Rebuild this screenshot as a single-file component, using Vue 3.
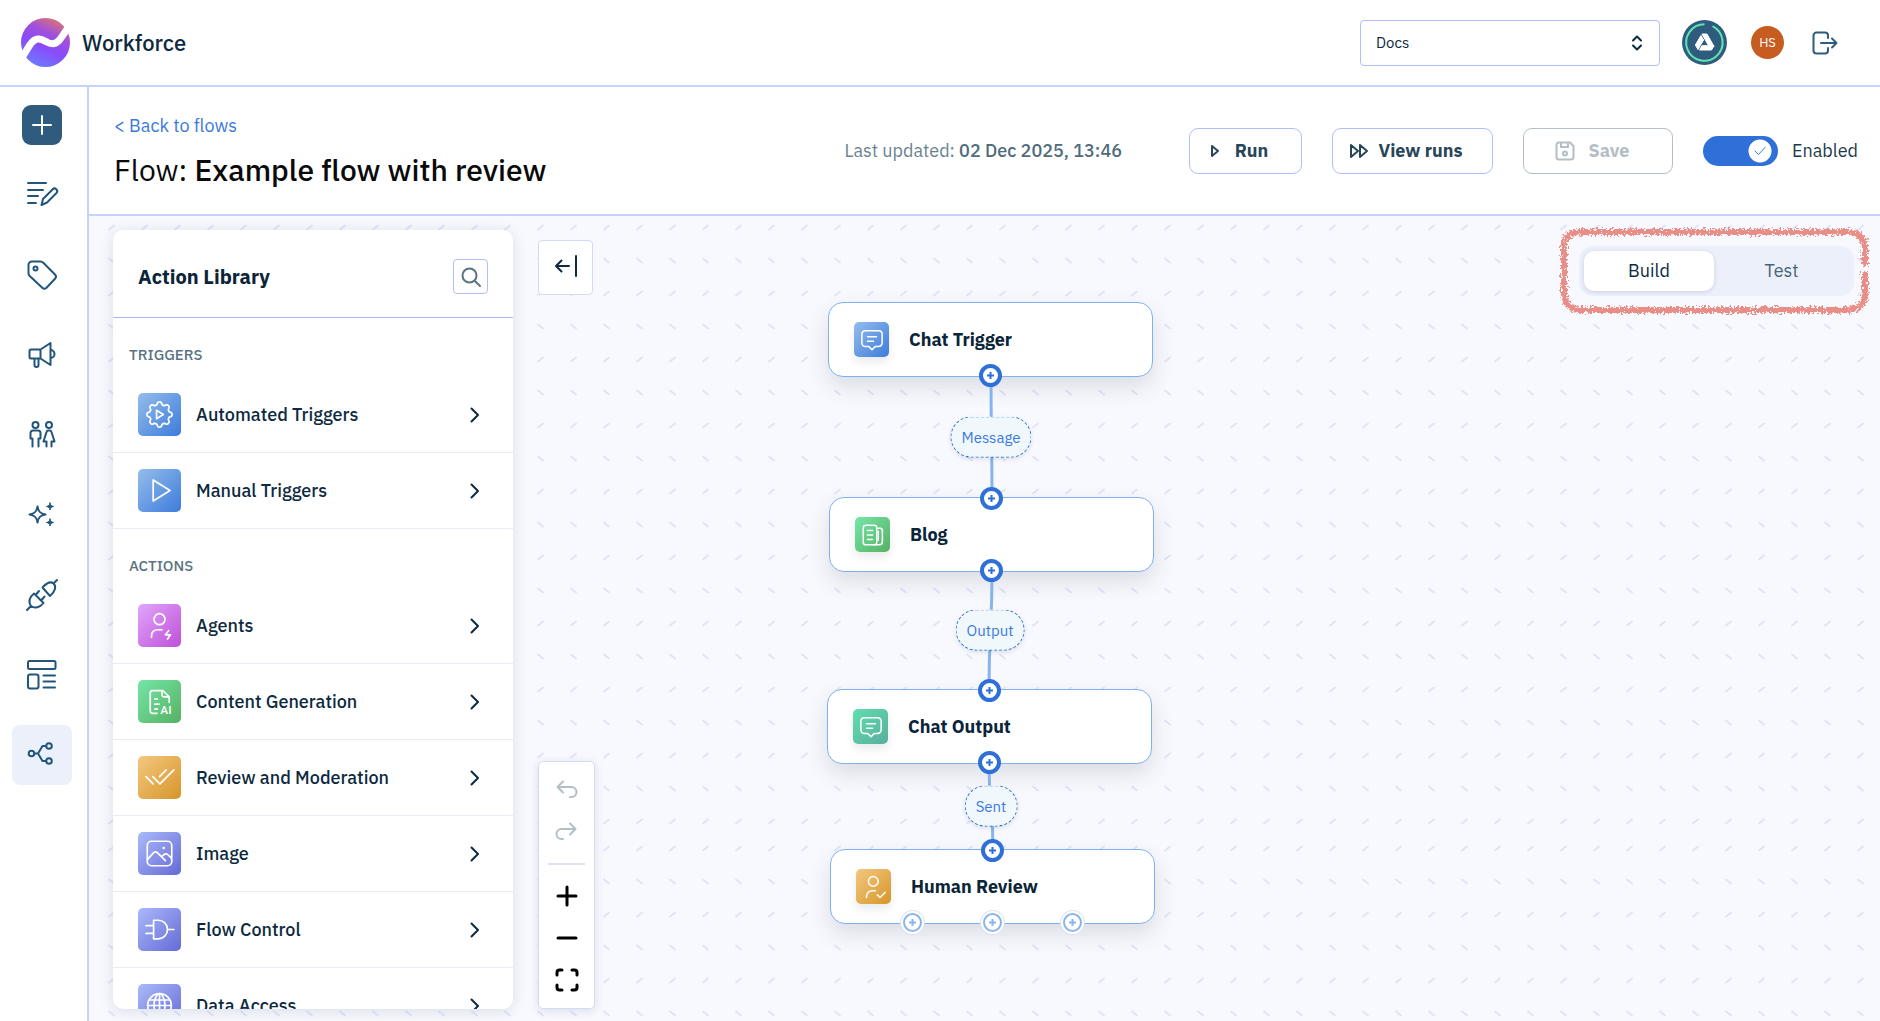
<script setup>
import { ref } from 'vue'

// Outline of an eight-lobed gear centred in a 32px box
const gearOutline = Array.from({ length: 96 }, (_, i) => {
  const angle = (i / 96) * Math.PI * 2
  const radius = 13.3 + 1.7 * Math.tanh(1.8 * Math.cos(8 * angle))
  return `${(16 + radius * Math.sin(angle)).toFixed(1)},${(16 - radius * Math.cos(angle)).toFixed(1)}`
}).join(' ')

const icons = {
  list: '<path d="M2 4h18M2 11h15M2 17h10M2 24h8"/><path d="M15.500 26l1.500-6 9.500-9.500a2.600 2.600 0 0 1 4 3.500L21 23.500z"/>',
  tag: '<path d="M2.500 6a3.500 3.500 0 0 1 3.500-3.500h8.500a4 4 0 0 1 2.800 1.200L29 15.500a3 3 0 0 1 0 4.200l-8.500 9a3 3 0 0 1-4.200 0L3.700 17a4 4 0 0 1-1.200-2.800z"/><circle cx="9.500" cy="9.500" r="2"/>',
  megaphone: '<path d="M12.500 10.500H5A1.500 1.500 0 0 0 3.500 12v6A1.500 1.500 0 0 0 5 19.500h9.500V10.500zM14.500 10.500L24.500 4v22l-10-6.500M24.500 11a4 4 0 0 1 0 8M8.500 19.500V26a2 2 0 0 0 4 0v-6.500"/>',
  people: '<circle cx="9.500" cy="6" r="3"/><circle cx="23" cy="6" r="3"/><path d="M6.500 27.500v-8H4.500V14a2.500 2.500 0 0 1 2.500-2.500h5a2.500 2.500 0 0 1 2.500 2.500v5.500h-2v8M20.500 27.500v-5H17.500l3-9.500a2 2 0 0 1 2-1.500h1a2 2 0 0 1 2 1.500l3 9.500H25.500v5"/>',
  sparkle: '<path d="M11.500 7.500c.8 5.200 2.800 7.200 8 8-5.200.8-7.200 2.800-8 8-.8-5.200-2.800-7.200-8-8 5.200-.8 7.200-2.800 8-8z"/><path fill="currentColor" stroke-width="1" d="M24 4c.5 2.300 1.200 3 3.500 3.500-2.300.5-3 1.200-3.500 3.500-.5-2.300-1.200-3-3.500-3.500 2.300-.5 3-1.200 3.500-3.500zM24 20c.5 2.300 1.200 3 3.500 3.500-2.300.5-3 1.200-3.500 3.500-.5-2.300-1.200-3-3.500-3.500 2.300-.5 3-1.200 3.500-3.500z"/>',
  plug: '<path d="M1 31l4-4M5 27c-3-4-1.500-9 3-12.500l9.500 9.500C14 28.500 8.500 30 5 27zM10 15.500l3-3.500M15.500 21l3-3.500M27.500 4.500L31 1M16.500 8.500c4-4.500 8-6.500 11-4s2 8-3.500 12.500z"/>',
  layout: '<rect x="2" y="2" width="27.500" height="8" rx="1.500"/><rect x="2" y="15.500" width="10.500" height="14" rx="2"/><path d="M17.500 16.500h11.500M17.500 22.500h11.500M17.500 28.500h11.500"/>',
  branch: '<circle cx="5.500" cy="14.500" r="2.800"/><circle cx="23" cy="7" r="2.800"/><circle cx="23" cy="22" r="2.800"/><path d="M8.500 14.500h3.500l4.500-7.500h3.500M12 14.500l4.500 7.500h3.500"/>',
  gearPlay: `<polygon points="${gearOutline}"/><path d="M12.500 11v10l8-5z"/>`,
  play: '<path d="M8.500 3.500v25L28.500 16z"/>',
  agent: '<circle cx="16" cy="8.500" r="6.500"/><path d="M6.500 30v-2a7 7 0 0 1 7-7h5.500M27 22l-4 5h6l-3.500 5"/>',
  contentAi: '<path d="M13 30H8a3 3 0 0 1-3-3V6a3 3 0 0 1 3-3h12l7.500 7.500V17M19 3v5a2.500 2.500 0 0 0 2.500 2.500h6M10.500 13h3M10.500 19h5M10.500 25h3"/><text x="17" y="31" font-size="14" font-family="Roboto, sans-serif" font-weight="500" fill="currentColor" stroke="none">AI</text>',
  checks: '<path d="M0 15l8.500 8.500M8 15l8.500 8.500L33 7M16 15l8-8"/>',
  image: '<rect x="1.500" y="1.500" width="29" height="29" rx="5"/><path d="M2 23l6.500-7.500c2-2 3.500-2 5.500 0L23 24.500M18.500 20l2.500-2.500c2-1.500 3.500-1.500 5 0L30 21.500"/><circle cx="21" cy="9.500" r=".6"/>',
  gate: '<path d="M9 5h5.500a11 11 0 0 1 0 22H9zM0 11.500h9M0 20.500h9M25.500 16H33"/>',
  globe: '<circle cx="16" cy="16" r="14"/><path d="M16 2v28M2.500 16h27M4.500 9.500h23M4.500 22.500h23M14 2.500c-6 8-6 19 0 27M18 2.500c6 8 6 19 0 27"/>',
  chat: '<path d="M7 3.500h18a4.500 4.500 0 0 1 4.500 4.500v12a4.500 4.500 0 0 1-4.500 4.500h-4.500L16 29l-4.500-4.500H7A4.500 4.500 0 0 1 2.500 20V8A4.500 4.500 0 0 1 7 3.500zM10 11.500h12M10 17.500h8"/>',
  news: '<rect x="3" y="3" width="18" height="26" rx="3.500"/><path d="M21 7h4.500a3 3 0 0 1 3 3v15a4 4 0 0 1-4 4H17M23 11v12M8.500 10h7M8.500 16h7M8.500 22h7"/>',
  review: '<circle cx="15" cy="8.500" r="6.500"/><path d="M6 30v-1.500a7.500 7.500 0 0 1 7.500-7.500H18M20.500 26.500l3.500 3.500 7-7"/>'
}

const navItems = [
  { label: 'Content', icon: 'list' },
  { label: 'Tags', icon: 'tag' },
  { label: 'Campaigns', icon: 'megaphone' },
  { label: 'Audiences', icon: 'people' },
  { label: 'AI tools', icon: 'sparkle' },
  { label: 'Integrations', icon: 'plug' },
  { label: 'Templates', icon: 'layout' },
  { label: 'Flows', icon: 'branch', active: true }
]

const sections = [
  {
    title: 'TRIGGERS',
    items: [
      { label: 'Automated Triggers', icon: 'gearPlay', tone: 'blue' },
      { label: 'Manual Triggers', icon: 'play', tone: 'blue' }
    ]
  },
  {
    title: 'ACTIONS',
    items: [
      { label: 'Agents', icon: 'agent', tone: 'purple' },
      { label: 'Content Generation', icon: 'contentAi', tone: 'green' },
      { label: 'Review and Moderation', icon: 'checks', tone: 'amber' },
      { label: 'Image', icon: 'image', tone: 'indigo' },
      { label: 'Flow Control', icon: 'gate', tone: 'indigo' },
      { label: 'Data Access', icon: 'globe', tone: 'indigo' }
    ]
  }
]

const nodes = [
  { label: 'Chat Trigger', icon: 'chat', tone: 'blue', x: 739, y: 86, handles: ['bottom'] },
  { label: 'Blog', icon: 'news', tone: 'green', x: 740, y: 281, handles: ['top', 'bottom'] },
  { label: 'Chat Output', icon: 'chat', tone: 'teal', x: 738, y: 473, handles: ['top', 'bottom'] },
  { label: 'Human Review', icon: 'review', tone: 'amber', x: 741, y: 633, handles: ['top'], outputs: 3 }
]

const edges = [
  { label: 'Message', x: 902, y: 221, from: [902, 160], to: [903, 282] },
  { label: 'Output', x: 901, y: 414, from: [903, 355], to: [900, 474] },
  { label: 'Sent', x: 902, y: 590, from: [900, 547], to: [904, 634] }
]

const project = ref('Docs')
const enabled = ref(true)
const mode = ref('Build')
</script>

<template>
  <div class="app">
    <header class="topbar">
      <a class="brand" href="#">
        <svg width="49" height="49" viewBox="0 0 49 49" aria-hidden="true">
          <defs>
            <linearGradient id="brand" x1=".3" y1="1" x2=".75" y2="0">
              <stop offset="0" stop-color="#6b7cff" />
              <stop offset=".4" stop-color="#8a4bfa" />
              <stop offset=".68" stop-color="#a050dc" />
              <stop offset="1" stop-color="#e2766c" />
            </linearGradient>
          </defs>
          <circle cx="24.500" cy="24.500" r="24.500" fill="url(#brand)" />
          <path d="M2 38C8 29 11 20.500 18 21S27 27 33 25.500 40 19 47 10" fill="none" stroke="#fff" stroke-width="7" />
        </svg>
        <span>Workforce</span>
      </a>
      <div class="top-actions">
        <div class="select-wrap">
          <select v-model="project" aria-label="Project"><option>Docs</option></select>
          <svg width="10" height="16" viewBox="0 0 10 16" class="line" aria-hidden="true"><path d="M1 5.500L5 1.500l4 4M1 10.500l4 4 4-4" /></svg>
        </div>
        <button class="drive" aria-label="Drive">
          <svg width="45" height="45" viewBox="0 0 45 45">
            <circle cx="22.500" cy="22.500" r="22.500" fill="#2f5c7e" />
            <path d="M30.500 6.200A18.200 18.200 0 1 1 22.500 4.300" fill="none" stroke="#5fe3b0" stroke-width="2" />
            <path d="M20 14h5l7 12.500h-5zM19 15.500l2.600 4.500-5.600 9.500-2.600-4.500zM17.500 30l2.500-4.300h12L29.500 30z" fill="#fff" stroke="#fff" stroke-width="1" stroke-linejoin="round" />
          </svg>
        </button>
        <span class="avatar">HS</span>
        <button class="logout" aria-label="Log out">
          <svg width="26" height="24" viewBox="0 0 26 24" class="line"><path d="M16 7V4.500A3 3 0 0 0 13 1.500H4.500a3 3 0 0 0-3 3v15a3 3 0 0 0 3 3H13a3 3 0 0 0 3-3V17M9 12h15.500M20 7.500l4.500 4.500-4.500 4.500" /></svg>
        </button>
      </div>
    </header>

    <div class="body">
      <nav class="sidebar" aria-label="Main">
        <button class="create" aria-label="Create">
          <svg width="20" height="20" viewBox="0 0 20 20" class="line"><path d="M10 1v18M1 10h18" /></svg>
        </button>
        <a v-for="item in navItems" :key="item.label" href="#" :aria-label="item.label" :class="['nav-item', { active: item.active }]">
          <svg width="32" height="32" viewBox="0 0 32 32" class="line" v-html="icons[item.icon]" />
        </a>
      </nav>

      <main class="main">
        <div class="flow-head">
          <div class="heading">
            <a href="#" class="back">&lt; Back to flows</a>
            <h1>Flow: <strong>Example flow with review</strong></h1>
          </div>
          <div class="controls">
            <p class="updated">Last updated: <b>02 Dec 2025, 13:46</b></p>
            <button class="btn run">
              <svg width="8" height="14" viewBox="0 0 8 14" class="line"><path d="M1 2v10l6-5z" /></svg>
              Run
            </button>
            <button class="btn runs">
              <svg width="18" height="14" viewBox="0 0 18 14" class="line"><path d="M1 1v12l7-6zM10 1v12l7-6z" /></svg>
              View runs
            </button>
            <button class="btn save" disabled>
              <svg width="20" height="20" viewBox="0 0 20 20" class="line"><path d="M1.500 4A2.500 2.500 0 0 1 4 1.500h11L18.500 5v11a2.500 2.500 0 0 1-2.500 2.500H4A2.500 2.500 0 0 1 1.500 16zM6 1.500V6h7V1.500" /><circle cx="10" cy="12.500" r="2" /></svg>
              Save
            </button>
            <label class="toggle">
              <span class="switch">
                <input v-model="enabled" type="checkbox" />
                <svg v-if="enabled" width="12" height="10" viewBox="0 0 12 10" class="line" aria-hidden="true"><path d="M1 5l3.500 3.500L11 1.500" /></svg>
              </span>
              Enabled
            </label>
          </div>
        </div>

        <div class="canvas">
          <svg class="pattern" width="100%" height="100%" aria-hidden="true">
            <defs>
              <pattern id="dash-a" width="33" height="66" x="6" y="-5" patternUnits="userSpaceOnUse">
                <path d="M14 18.500l5-4M14 47.500l5 4" />
              </pattern>
              <pattern id="dash-b" width="33" height="66" x="6" y="-44" patternUnits="userSpaceOnUse">
                <path d="M14 18.500l5-4M14 47.500l5 4" />
              </pattern>
            </defs>
            <rect width="100%" height="618" fill="url(#dash-a)" />
            <rect y="618" width="100%" height="100%" fill="url(#dash-b)" />
          </svg>

          <div class="flow">
            <div v-for="node in nodes" :key="node.label" class="node" :style="{ left: node.x + 'px', top: node.y + 'px' }">
              <span :class="['tile', 'small', node.tone]"><svg width="24" height="24" viewBox="0 0 32 32" class="line" v-html="icons[node.icon]" /></span>
              <span class="node-title">{{ node.label }}</span>
            </div>
            <svg class="edges" width="100%" height="100%" aria-hidden="true">
              <path v-for="e in edges" :key="e.label" :d="`M${e.from} C${e.from[0]},${e.y} ${e.to[0]},${e.y} ${e.to}`" />
            </svg>
            <span v-for="e in edges" :key="e.label" class="pill" :style="{ left: e.x + 'px', top: e.y + 'px' }">{{ e.label }}</span>
            <div v-for="node in nodes" :key="node.label" class="ports" :style="{ left: node.x + 'px', top: node.y + 'px' }">
              <button v-for="side in node.handles" :key="side" :class="['port', side]" :aria-label="`Add step, ${side}`">
                <svg width="9" height="9" viewBox="0 0 9 9"><path d="M4.500 1v7M1 4.500h7" /></svg>
              </button>
              <div v-if="node.outputs" class="outputs">
                <button v-for="n in node.outputs" :key="n" class="port open" :aria-label="`Add output ${n}`">
                  <svg width="9" height="9" viewBox="0 0 9 9"><path d="M4.500 1v7M1 4.500h7" /></svg>
                </button>
              </div>
            </div>
          </div>

          <aside class="library">
            <div class="library-head">
              <h2>Action Library</h2>
              <button class="search" aria-label="Search actions">
                <svg width="20" height="20" viewBox="0 0 20 20" class="line"><circle cx="8.500" cy="8.500" r="7" /><path d="M13.500 13.500l5.500 5.500" /></svg>
              </button>
            </div>
            <section v-for="s in sections" :key="s.title">
              <h3>{{ s.title }}</h3>
              <button v-for="item in s.items" :key="item.label" class="row">
                <span :class="['tile', item.tone]"><svg width="27" height="27" viewBox="0 0 32 32" class="line" v-html="icons[item.icon]" /></span>
                <span class="row-label">{{ item.label }}</span>
                <svg width="10" height="16" viewBox="0 0 10 16" class="line"><path d="M1.500 1.500L8 8l-6.500 6.500" /></svg>
              </button>
            </section>
          </aside>

          <div class="tools">
            <button class="collapse" aria-label="Collapse library">
              <svg width="24" height="24" viewBox="0 0 24 24" class="line"><path d="M15 12H2M7.500 6.500L2 12l5.500 5.500M22 2v20" /></svg>
            </button>
            <div class="toolbar">
              <button disabled aria-label="Undo"><svg width="24" height="20" viewBox="0 0 24 20" class="line"><path d="M8 1.500L2.500 7 8 12.500M2.500 7h14a5 5 0 0 1 0 10H15" /></svg></button>
              <button disabled aria-label="Redo"><svg width="24" height="20" viewBox="0 0 24 20" class="line"><path d="M15 1.500L20.500 7 15 12.500M20.500 7h-14a5 5 0 0 0 0 10H8" /></svg></button>
              <hr />
              <button aria-label="Zoom in"><svg width="22" height="22" viewBox="0 0 22 22" class="line bold"><path d="M11 2v18M2 11h18" /></svg></button>
              <button aria-label="Zoom out"><svg width="22" height="22" viewBox="0 0 22 22" class="line bold"><path d="M2 11h18" /></svg></button>
              <button aria-label="Fit view"><svg width="24" height="24" viewBox="0 0 24 24" class="line bold"><path d="M2 7V4.500A2.500 2.500 0 0 1 4.500 2H7M17 2h2.500A2.500 2.500 0 0 1 22 4.500V7M22 17v2.500a2.500 2.500 0 0 1-2.500 2.500H17M7 22H4.500A2.500 2.500 0 0 1 2 19.500V17" /></svg></button>
            </div>
          </div>

          <div class="mode">
            <svg class="marker" width="316" height="92" viewBox="0 0 316 92" aria-hidden="true">
              <filter id="crayon" x="-5%" y="-10%" width="110%" height="120%">
                <feTurbulence type="fractalNoise" baseFrequency=".45" numOctaves="3" seed="4" />
                <feDisplacementMap in="SourceGraphic" scale="9" xChannelSelector="R" yChannelSelector="G" />
              </filter>
              <path d="M308 41V23Q307 8 292 7H24Q7 7 7 22V70Q8 84 24 85H290Q307 84 308 70V47" filter="url(#crayon)" />
            </svg>
            <div class="tabs" role="tablist">
              <button v-for="m in ['Build', 'Test']" :key="m" role="tab" :aria-selected="mode === m" :class="{ on: mode === m }" @click="mode = m">{{ m }}</button>
            </div>
          </div>
        </div>
      </main>
    </div>
  </div>
</template>

<style>
body { background: #fff; }
</style>

<style scoped>
.app, .app * { box-sizing: border-box; }
.app {
  height: 100vh;
  display: flex;
  flex-direction: column;
  overflow: hidden;
  color: #0d2a40;
  font-family: "IBM Plex Sans", Roboto, sans-serif;
  font-size: 18px;
  line-height: 24px;
}
button { font: inherit; color: inherit; padding: 0; margin: 0; border: 0; background: none; display: flex; align-items: center; justify-content: center; }
a { text-decoration: none; color: inherit; }
h1, h2, h3, p { margin: 0; font-weight: 400; }
svg { flex: none; display: block; overflow: visible; }
.line { fill: none; stroke: currentColor; stroke-width: 2; stroke-linecap: round; stroke-linejoin: round; }

.topbar { flex: none; height: 87px; padding: 0 42px 0 21px; border-bottom: 2px solid #c8d1fb; display: flex; align-items: center; justify-content: space-between; }
.brand { display: flex; align-items: center; gap: 12px; font-size: 22px; font-weight: 500; color: #0d2a40; }
.top-actions { display: flex; align-items: center; }
.select-wrap { position: relative; width: 300px; height: 46px; margin-right: 22px; }
.select-wrap select { width: 100%; height: 100%; appearance: none; border: 1px solid #b0befa; border-radius: 4px; background: #fff; padding: 0 15px; font: inherit; font-size: 15px; color: #0d2a40; }
.select-wrap svg { position: absolute; right: 18px; top: 15px; pointer-events: none; }
.drive { margin-right: 24px; }
.avatar { width: 33px; height: 33px; border-radius: 50%; background: #c65c20; color: #fff; font-size: 13px; display: flex; align-items: center; justify-content: center; margin-right: 28px; }
.logout { color: #2f5c7e; }

.body { flex: 1; display: flex; min-height: 0; }
.sidebar { flex: none; width: 89px; border-right: 2px solid #c8d1fb; padding: 18px 15px 0 12px; display: flex; flex-direction: column; align-items: center; gap: 20px; color: #22557a; }
.create { width: 40px; height: 40px; border-radius: 9px; background: #2f5c7e; color: #fff; flex: none; }
.nav-item { flex: none; width: 60px; height: 60px; border-radius: 8px; display: flex; align-items: center; justify-content: center; }
.nav-item.active { background: #ecf0fb; }

.main { flex: 1; min-width: 0; display: flex; flex-direction: column; }
.flow-head { flex: none; height: 129px; padding: 0 22px 0 25px; border-bottom: 2px solid #c8d1fb; display: flex; align-items: center; justify-content: space-between; }
.back { color: #3b78e0; }
.heading { display: flex; flex-direction: column; gap: 14px; }
h1 { font-size: 30px; line-height: 36px; color: #0a0a0a; }
h1 strong { font-weight: 500; }
.controls { display: flex; align-items: center; gap: 30px; }
.updated { color: #6b8391; margin-right: 37px; }
.updated b { font-weight: 500; color: #4f6b7c; }
.btn { height: 46px; border: 1px solid #b0befa; border-radius: 9px; background: #fff; font-weight: 700; color: #28465a; padding-right: 12px; }
.run { width: 113px; gap: 16px; }
.runs { width: 161px; gap: 10px; }
.save { width: 150px; gap: 14px; border-color: #b3bec5; color: #b3bec5; }
.toggle { display: flex; align-items: center; gap: 14px; color: #1d3a4e; }
.switch { position: relative; width: 75px; height: 30px; }
.switch input { appearance: none; display: block; margin: 0; width: 100%; height: 100%; border-radius: 15px; background: #2e6fd8 radial-gradient(circle at 57px 15px, #fff 11px, transparent 12px); }
.switch svg { position: absolute; left: 51px; top: 10px; color: #3b78e0; pointer-events: none; stroke-width: 1; }

.canvas { position: relative; flex: 1; min-height: 0; background: #f8f9fe; padding: 14px 24px 12px; display: flex; gap: 25px; overflow: hidden; }
.pattern { position: absolute; inset: 0; }
.pattern path { stroke: #e0e4f8; stroke-width: 2; stroke-linecap: round; fill: none; }
.flow, .edges { position: absolute; inset: 0; }
.edges path { fill: none; stroke: #86b4ec; stroke-width: 3; }
.node { position: absolute; width: 325px; height: 75px; border: 1px solid #80b1ef; border-radius: 15px; background: #fff; box-shadow: 0 10px 22px rgba(50, 55, 80, .14); padding: 0 25px; display: flex; align-items: center; gap: 20px; }
.node-title { font-weight: 700; color: #0a2438; }
.tile { flex: none; width: 43px; height: 43px; border-radius: 5px; color: #fff; display: flex; align-items: center; justify-content: center; }
.tile.small { width: 35px; height: 35px; box-shadow: 0 5px 9px rgba(50, 55, 80, .1); }
.blue { background: linear-gradient(135deg, #94bdeb, #3d7bdc); }
.green { background: linear-gradient(135deg, #74e6a8, #56b163); }
.purple { background: linear-gradient(135deg, #e0a6fb, #bf4fd8); }
.amber { background: linear-gradient(135deg, #f3c880, #d7952a); }
.indigo { background: linear-gradient(135deg, #a9bafa, #656ad6); }
.teal { background: linear-gradient(135deg, #60dfae, #58ae9c); }
.pill { position: absolute; transform: translate(-50%, -50%); height: 41px; padding: 0 10px; border: 1px dashed #2e6fd8; border-radius: 21px; background: #f1f8fc; color: #3b78e0; font-size: 15px; display: flex; align-items: center; box-shadow: 0 2px 4px rgba(50, 55, 80, .12); }
.ports { position: absolute; width: 325px; height: 75px; pointer-events: none; }
.port { position: absolute; left: 151px; width: 23px; height: 23px; border: 4px solid #2e6fd8; border-radius: 50%; background: #fff; pointer-events: auto; }
.port path { fill: none; stroke: #2e6fd8; stroke-width: 2; }
.port.top { top: -10px; }
.port.bottom { bottom: -10px; }
.outputs { position: absolute; left: 71px; right: 71px; bottom: -10px; display: flex; justify-content: space-between; }
.port.open { position: static; border: 2px solid #8ab6ee; width: 19px; height: 19px; margin: 2px; box-shadow: 0 0 0 2px #fff, 0 0 0 3px #dbe2ee; }
.port.open path { stroke: #8ab6ee; }

.library { position: relative; flex: none; width: 400px; background: #fff; border-radius: 10px; box-shadow: 0 2px 14px rgba(50, 60, 110, .15); overflow: hidden; }
.library-head { height: 88px; border-bottom: 1px solid #a9bcf2; padding: 6px 25px 0; display: flex; align-items: center; justify-content: space-between; }
h2 { font-size: 20px; font-weight: 700; color: #0a2438; }
.search { width: 35px; height: 35px; border: 1px solid #b0befa; border-radius: 4px; color: #5a7383; }
h3 { height: 59px; padding: 25px 16px 0; font-size: 15px; font-weight: 500; color: #5a7383; }
.row { width: 100%; height: 76px; border-bottom: 1px solid #e8ebfa; padding: 0 33px 0 25px; gap: 15px; }
.row-label { flex: 1; text-align: left; font-weight: 500; }

.tools { position: relative; display: flex; flex-direction: column; justify-content: space-between; align-items: flex-start; padding-top: 10px; }
.collapse { width: 55px; height: 55px; border: 1px solid #d3daf9; border-radius: 4px; background: #fff; padding-bottom: 4px; }
.toolbar { width: 57px; border: 1px solid #d3daf9; border-radius: 5px; background: #fff; box-shadow: 0 2px 10px rgba(50, 60, 110, .14); padding: 7px 9px; color: #000; display: flex; flex-direction: column; align-items: center; }
.toolbar button { width: 100%; height: 42px; }
.toolbar button:disabled { color: #b3bec5; }
.toolbar hr { width: 100%; height: 2px; margin: 10px 0; border: 0; background: #dde2fa; }
.bold { stroke-width: 3; }

.mode { position: absolute; top: 30px; right: 26px; }
.marker { position: absolute; left: -22px; top: -21px; pointer-events: none; }
.marker path { fill: none; stroke: #ea8d87; stroke-width: 6; }
.tabs { width: 275px; height: 50px; border-radius: 14px; background: #ecf0fb; padding: 5px; display: flex; }
.tabs button { width: 130px; border-radius: 10px; color: #4a6475; }
.tabs button + button { flex: 1; }
.tabs .on { background: #fff; color: #0d2a40; box-shadow: 0 1px 4px rgba(50, 60, 110, .18); }
</style>
